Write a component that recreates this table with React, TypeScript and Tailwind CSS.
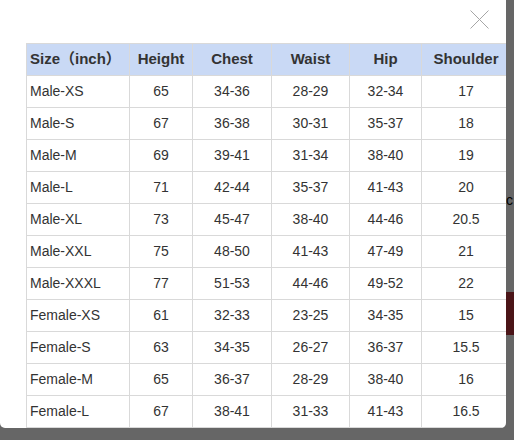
const rows: string[][] = [
  ["Male-XS", "65", "34-36", "28-29", "32-34", "17"],
  ["Male-S", "67", "36-38", "30-31", "35-37", "18"],
  ["Male-M", "69", "39-41", "31-34", "38-40", "19"],
  ["Male-L", "71", "42-44", "35-37", "41-43", "20"],
  ["Male-XL", "73", "45-47", "38-40", "44-46", "20.5"],
  ["Male-XXL", "75", "48-50", "41-43", "47-49", "21"],
  ["Male-XXXL", "77", "51-53", "44-46", "49-52", "22"],
  ["Female-XS", "61", "32-33", "23-25", "34-35", "15"],
  ["Female-S", "63", "34-35", "26-27", "36-37", "15.5"],
  ["Female-M", "65", "36-37", "28-29", "38-40", "16"],
  ["Female-L", "67", "38-41", "31-33", "41-43", "16.5"],
];

const headers = ["Size（inch）", "Height", "Chest", "Waist", "Hip", "Shoulder"];
const widths = [103, 63, 79, 78, 72, 89];

export default function App() {
  return (
    <div
      className="flex h-[440px] w-[514px] overflow-hidden bg-[#666666]"
      style={{ fontFamily: '"Liberation Sans", Arial, "Noto Sans CJK SC", sans-serif' }}
    >
      {/* Modal */}
      <div className="relative h-[428px] w-[506px] shrink-0 overflow-hidden rounded-b-[5px] bg-white pl-[26px] pt-[43px]">
        <button className="absolute right-[17px] top-[10px] h-[19px] w-[19px]">
          <svg viewBox="0 0 19 19" className="h-[19px] w-[19px]">
            <path d="M0.5 0.5 L18.5 18.5 M18.5 0.5 L0.5 18.5" stroke="#a6a6a6" strokeWidth="1" fill="none" />
          </svg>
        </button>

        <table className="w-[484px] table-fixed border-collapse text-[14px] text-[#333]">
          <colgroup>
            {widths.map((w, i) => (
              <col key={i} style={{ width: w }} />
            ))}
          </colgroup>
          <thead>
            <tr className="h-[32px] bg-[#c9d9f5]">
              {headers.map((h, i) => (
                <th
                  key={h}
                  className={`border border-[#d9d9d9] text-[15px] font-bold ${i === 0 ? "pl-[3px] text-left" : "text-center"}`}
                >
                  {h}
                </th>
              ))}
            </tr>
          </thead>
          <tbody>
            {rows.map((r) => (
              <tr key={r[0]} className="h-[32px]">
                {r.map((c, i) => (
                  <td
                    key={i}
                    className={`border border-[#d9d9d9] ${i === 0 ? "pl-[3px] text-left" : "text-center"}`}
                  >
                    {c}
                  </td>
                ))}
              </tr>
            ))}
          </tbody>
        </table>
      </div>

      {/* Page behind the overlay */}
      <div className="flex w-[8px] shrink-0 flex-col">
        <div className="h-[192px]" />
        <div className="h-[16px] text-[14px] leading-[16px] text-black">c</div>
        <div className="h-[84px]" />
        <div className="h-[43px] bg-[#4b1518]" />
      </div>
    </div>
  );
}
